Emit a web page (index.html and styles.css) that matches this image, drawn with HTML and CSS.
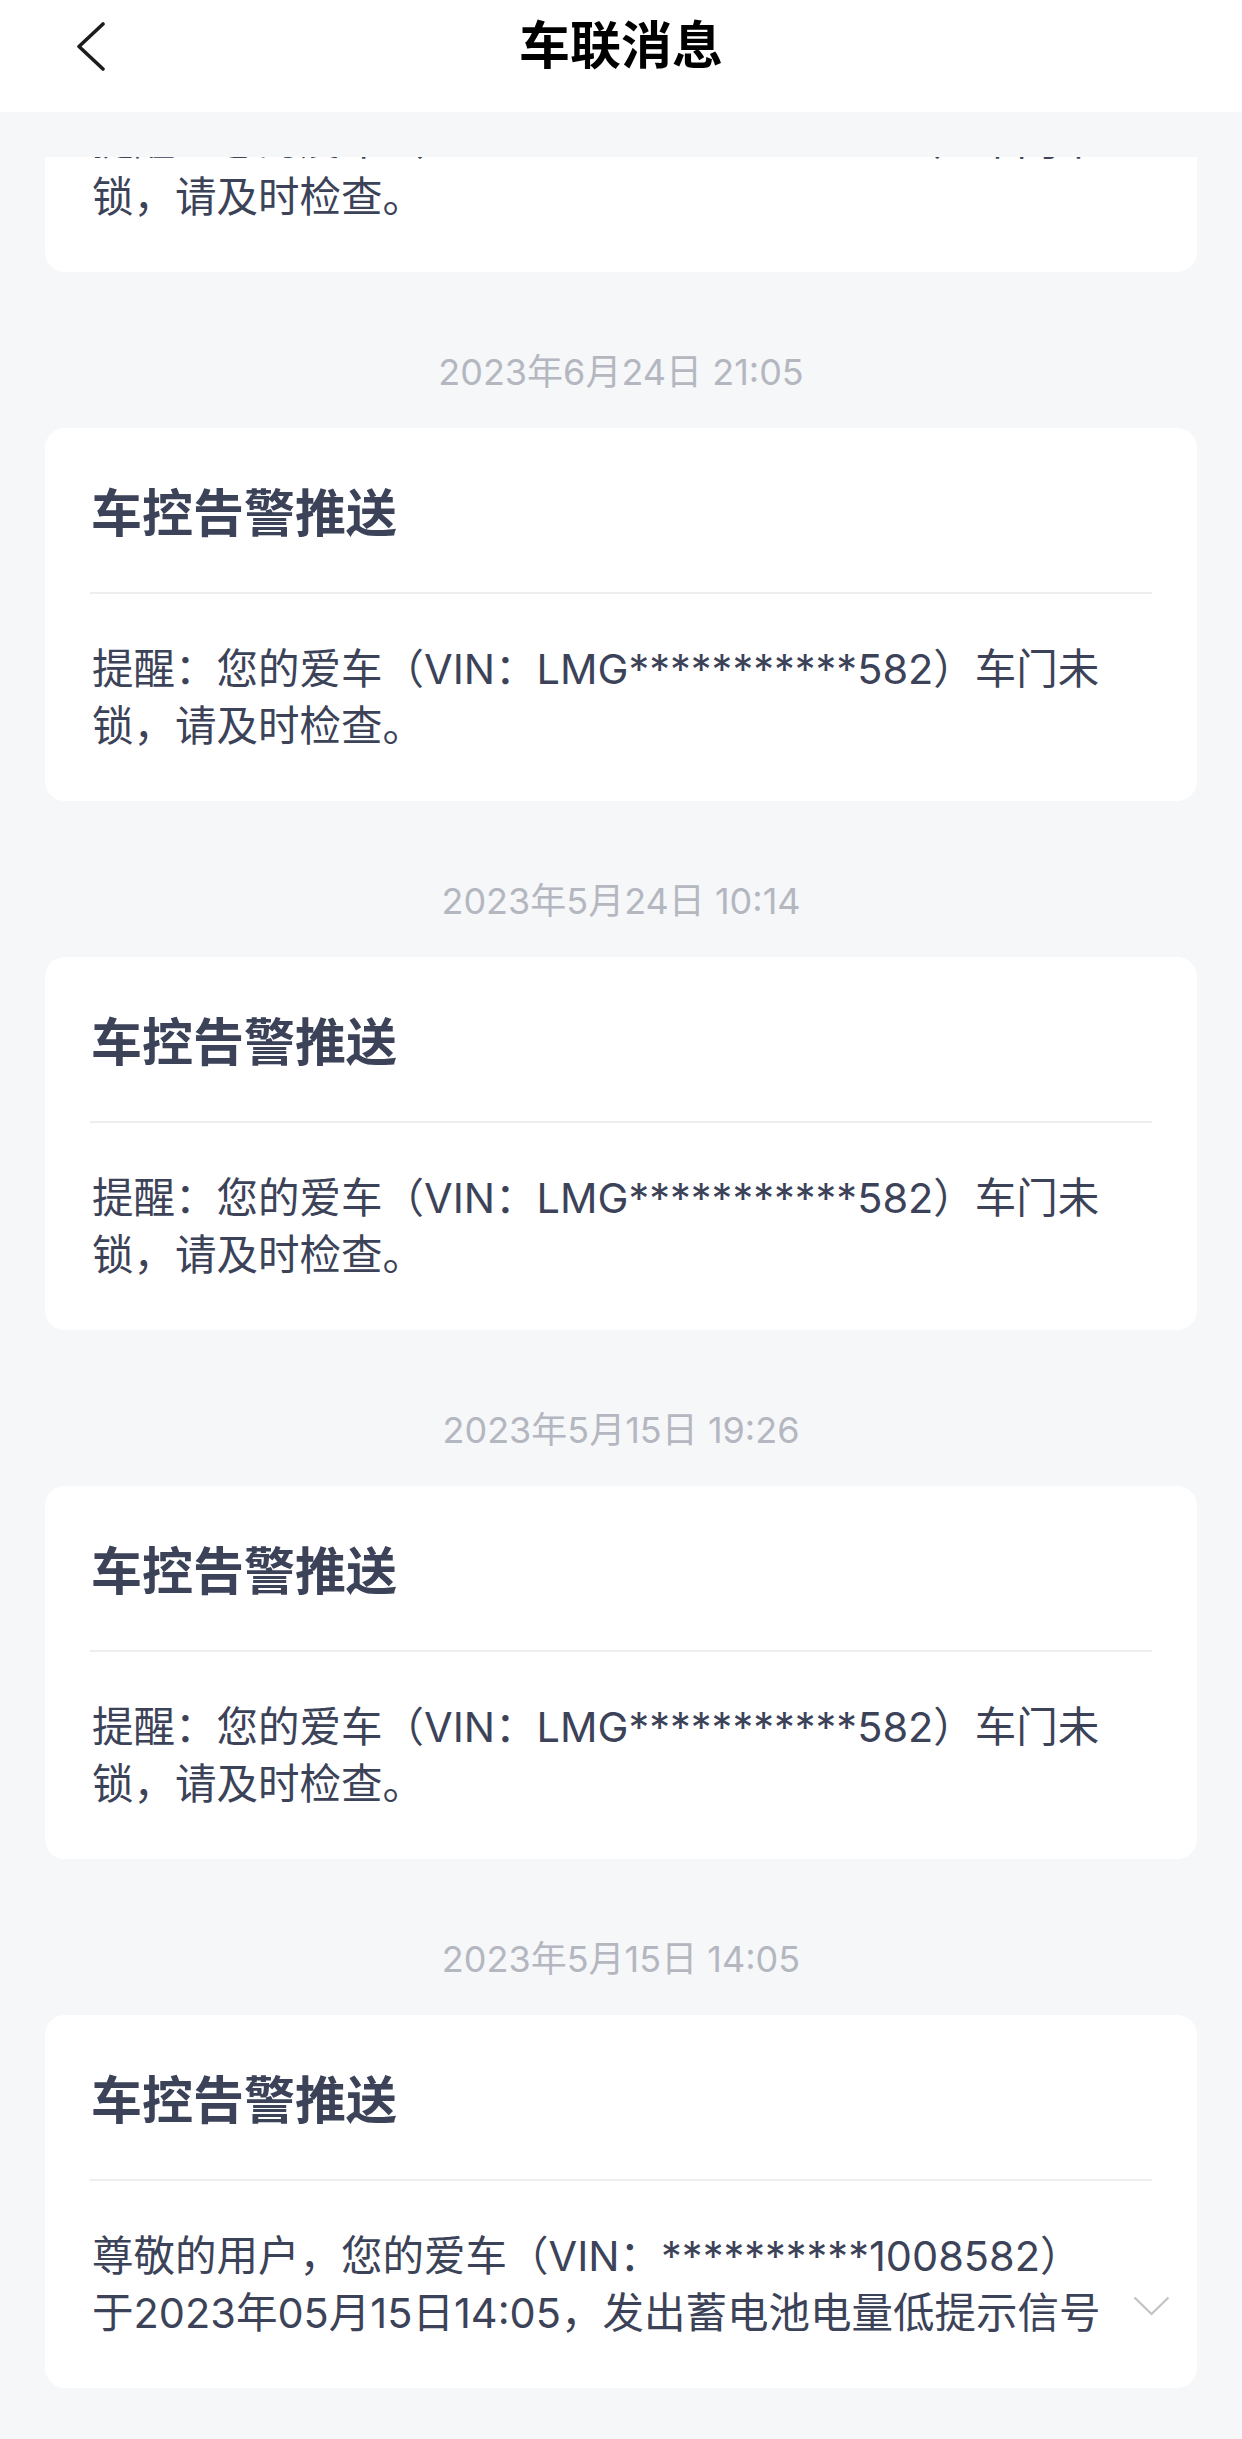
FILE: index.html
```html
<!DOCTYPE html>
<html lang="zh-CN">
<head>
  <meta charset="UTF-8">
  <title>车联消息</title>
  <link rel="stylesheet" href="styles.css">
</head>
<body>

<header class="topbar">
  <button class="back" aria-label="返回">
    <svg width="30" height="50" viewBox="0 0 30 50"><polyline points="27,3 3,25.5 27,48" fill="none" stroke="#1c1c1c" stroke-width="3.6" stroke-linecap="round" stroke-linejoin="round"/></svg>
  </button>
  <h1 class="title">车联消息</h1>
  <span></span>
</header>

<main class="list">
  <div class="feed">

    <div class="card">
      <div class="card-head">车控告警推送</div>
      <div class="card-body">
        <p class="msg">提醒：您的爱车（VIN：LMG***********582）车门未锁，请及时检查。</p>
        <span class="more"></span>
      </div>
    </div>

    <div class="date">2023年6月24日 21:05</div>
    <div class="card">
      <div class="card-head">车控告警推送</div>
      <div class="card-body">
        <p class="msg">提醒：您的爱车（VIN：LMG***********582）车门未锁，请及时检查。</p>
        <span class="more"></span>
      </div>
    </div>

    <div class="date">2023年5月24日 10:14</div>
    <div class="card">
      <div class="card-head">车控告警推送</div>
      <div class="card-body">
        <p class="msg">提醒：您的爱车（VIN：LMG***********582）车门未锁，请及时检查。</p>
        <span class="more"></span>
      </div>
    </div>

    <div class="date">2023年5月15日 19:26</div>
    <div class="card">
      <div class="card-head">车控告警推送</div>
      <div class="card-body">
        <p class="msg">提醒：您的爱车（VIN：LMG***********582）车门未锁，请及时检查。</p>
        <span class="more"></span>
      </div>
    </div>

    <div class="date">2023年5月15日 14:05</div>
    <div class="card">
      <div class="card-head">车控告警推送</div>
      <div class="card-body">
        <p class="msg clamp">尊敬的用户，您的爱车（VIN：**********1008582）<br>于2023年05月15日14:05，发出蓄电池电量低提示信号</p>
        <span class="more">
          <svg width="37" height="20" viewBox="0 0 37 20"><polyline points="1.5,1.5 18.5,18 35.5,1.5" fill="none" stroke="#c3c3c6" stroke-width="2.2"/></svg>
        </span>
      </div>
    </div>

  </div>
</main>

</body>
</html>
```

FILE: styles.css
```css
:root {
  --bg: #f6f7f9;
  --card-bg: #fff;
  --text: #3c4359;
  --muted: #b4b7c0;
  --line: #eeeeef;
}
html, body {
  height: 100%;
}
body {
  margin: 0;
  display: flex;
  flex-direction: column;
  background-color: var(--bg);
  color: var(--text);
  font-family: Inter, "Noto Sans CJK SC", sans-serif;
}
.topbar {
  height: 112px;
  box-sizing: border-box;
  padding-bottom: 20px;
  display: grid;
  grid-template-columns: 1fr auto 1fr;
  align-items: center;
  background-color: #fff;
  flex-shrink: 0;
}
.back {
  justify-self: start;
  margin-left: 76px;
  padding: 0;
  border: none;
  background: none;
  display: flex;
  cursor: pointer;
}
.title {
  margin: 0;
  font-size: 51px;
  font-weight: 600;
  line-height: 60px;
  color: #000;
}
.list {
  flex: 1;
  margin-top: 45px;
  overflow: hidden;
}
.feed {
  margin-top: -258px;
  padding: 0 45px;
}
.date {
  padding: 75px 0 30px;
  font-size: 36px;
  line-height: 51px;
  text-align: center;
  color: var(--muted);
}
.card {
  background-color: var(--card-bg);
  border-radius: 20px;
}
.card-head {
  height: 164px;
  margin: 0 45px;
  display: flex;
  align-items: center;
  padding-left: 1px;
  border-bottom: 2px solid var(--line);
  font-size: 51px;
  font-weight: 700;
  color: var(--text);
}
.card-body {
  display: flex;
  align-items: flex-end;
  gap: 8px;
  padding: 47px 27px 46px 47px;
}
.msg {
  flex: 1;
  margin: 0;
  font-size: 41.5px;
  line-height: 57px;
}
.clamp {
  display: -webkit-box;
  -webkit-line-clamp: 2;
  -webkit-box-orient: vertical;
  overflow: hidden;
}
.more {
  width: 37px;
  flex-shrink: 0;
  display: flex;
  margin-bottom: 26px;
}
```
